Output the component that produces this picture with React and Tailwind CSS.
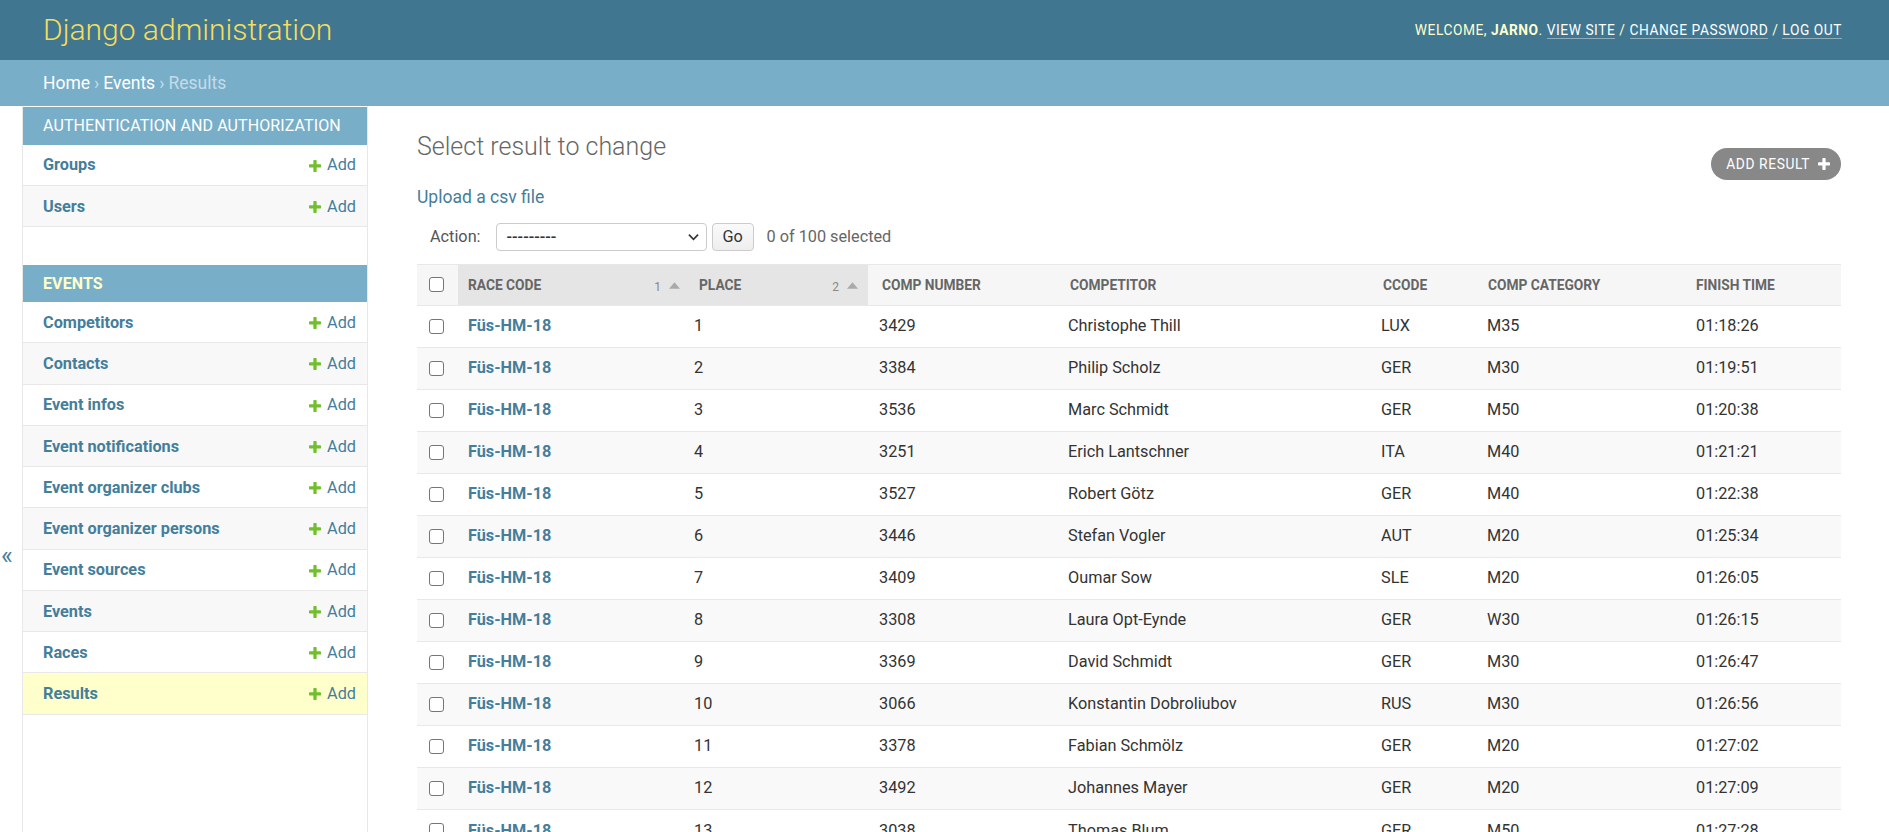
import React from "react";

const rows = [
  ["1", "3429", "Christophe Thill", "LUX", "M35", "01:18:26"],
  ["2", "3384", "Philip Scholz", "GER", "M30", "01:19:51"],
  ["3", "3536", "Marc Schmidt", "GER", "M50", "01:20:38"],
  ["4", "3251", "Erich Lantschner", "ITA", "M40", "01:21:21"],
  ["5", "3527", "Robert Götz", "GER", "M40", "01:22:38"],
  ["6", "3446", "Stefan Vogler", "AUT", "M20", "01:25:34"],
  ["7", "3409", "Oumar Sow", "SLE", "M20", "01:26:05"],
  ["8", "3308", "Laura Opt-Eynde", "GER", "W30", "01:26:15"],
  ["9", "3369", "David Schmidt", "GER", "M30", "01:26:47"],
  ["10", "3066", "Konstantin Dobroliubov", "RUS", "M30", "01:26:56"],
  ["11", "3378", "Fabian Schmölz", "GER", "M20", "01:27:02"],
  ["12", "3492", "Johannes Mayer", "GER", "M20", "01:27:09"],
  ["13", "3038", "Thomas Blum", "GER", "M50", "01:27:28"],
];

const PLUS =
  "M1600 796v192q0 40-28 68t-68 28h-416v416q0 40-28 68t-68 28h-192q-40 0-68-28t-28-68v-416h-416q-40 0-68-28t-28-68v-192q0-40 28-68t68-28h416v-416q0-40 28-68t68-28h192q40 0 68 28t28 68v416h416q40 0 68 28t28 68z";

function PlusIcon({ className }) {
  return (
    <svg viewBox="192 192 1408 1408" className={className}>
      <path d={PLUS} fill="currentColor" />
    </svg>
  );
}

function SortArrow() {
  return (
    <svg viewBox="0 0 10 6" className="w-[11px] h-[7px] text-[#aaaaaa]">
      <path d="M0 6 L5 0 L10 6 Z" fill="currentColor" />
    </svg>
  );
}

function Checkbox() {
  return (
    <div className="w-[15px] h-[15px] rounded-[3px] border-[1.5px] border-[#767676] bg-white -mt-[1px]" />
  );
}

function SideRow({ name, shade, current }) {
  const bg = current ? "bg-[#ffffcc]" : shade ? "bg-[#f8f8f8]" : "bg-white";
  return (
    <div
      className={`flex items-center justify-between h-[41.25px] border-b border-[#e8e8e8] pl-[20px] pr-[11px] pt-[2px] ${bg}`}
    >
      <span className="font-bold text-[16.25px] text-[#447e9b]">{name}</span>
      <span className="flex items-center gap-[6px] text-[16.25px] text-[#447e9b]">
        <PlusIcon className="w-[12px] h-[12px] text-[#70bf2b]" />
        Add
      </span>
    </div>
  );
}

function Caption({ children, current }) {
  return (
    <div
      className={`h-[37.5px] flex items-center pl-[20px] pt-[1px] bg-[#79aec8] text-[16px] tracking-[0.1px] uppercase ${
        current ? "font-bold text-[#ffffcc]" : "text-white"
      }`}
    >
      {children}
    </div>
  );
}

const cols = [41, 232, 178, 192, 313, 105, 208, 155];

export default function App() {
  const eventModels = [
    "Competitors",
    "Contacts",
    "Event infos",
    "Event notifications",
    "Event organizer clubs",
    "Event organizer persons",
    "Event sources",
    "Events",
    "Races",
    "Results",
  ];
  return (
    <div className="h-[832px] overflow-hidden bg-white font-['Roboto','Liberation_Sans',sans-serif] text-[#333]">
      {/* Header */}
      <div className="h-[60px] bg-[#417690] flex items-center justify-between pl-[43px] pr-[47px]">
        <div className="text-[30px] font-light text-[#f5dd5d] leading-none">
          Django administration
        </div>
        <div className="text-[13.75px] tracking-[0.55px] uppercase text-[#ffffcc]">
          Welcome, <strong className="font-bold">Jarno</strong>.{" "}
          <span className="text-white border-b border-white/40">View site</span> /{" "}
          <span className="text-white border-b border-white/40">Change password</span> /{" "}
          <span className="text-white border-b border-white/40">Log out</span>
        </div>
      </div>
      {/* Breadcrumbs */}
      <div className="h-[46px] bg-[#79aec8] flex items-center pl-[43px] text-[17.5px] text-[#c4dce8]">
        <span className="text-white">Home</span>
        <span className="mx-[4px]">›</span>
        <span className="text-white">Events</span>
        <span className="mx-[4px]">›</span>
        <span>Results</span>
      </div>
      {/* Body */}
      <div className="flex h-[726px]">
        <div className="w-[23px] shrink-0 border-r border-[#e8e8e8] flex flex-col items-start pt-[437px] pl-[1px]">
          <span className="text-[25px] leading-none text-[#447e9b]">«</span>
        </div>
        <div className="w-[345px] shrink-0 border-r border-[#e8e8e8] pt-[1px]">
          <Caption>Authentication and Authorization</Caption>
          <SideRow name="Groups" />
          <SideRow name="Users" shade />
          <div className="h-[37.5px]" />
          <Caption current>Events</Caption>
          {eventModels.map((m, i) => (
            <SideRow
              key={m}
              name={m}
              shade={i % 2 === 1}
              current={m === "Results"}
            />
          ))}
        </div>
        <div className="flex-1 pl-[49px] pr-[48px] pt-[26px]">
          <div className="flex items-start justify-between">
            <h1 className="text-[25px] font-light text-[#666] leading-[30px]">
              Select result to change
            </h1>
            <div className="mt-[16px] h-[32px] pl-[15px] pr-[11px] rounded-full bg-[#888888] flex items-center gap-[8px] text-white text-[13.75px] tracking-[0.625px] uppercase">
              Add result
              <PlusIcon className="w-[12px] h-[12px] text-white" />
            </div>
          </div>
          <div className="mt-[7px] text-[17.5px] leading-[21px] text-[#447e9b]">
            Upload a csv file
          </div>
          <div className="mt-[15px] flex items-center h-[28px] text-[16.25px]">
            <span className="ml-[13px] text-[#555]">Action:</span>
            <div className="ml-[15px] w-[211px] h-[28px] border border-[#cccccc] rounded-[4px] bg-white flex items-center justify-between pl-[10px] pr-[7px]">
              <span className="text-[#333] text-[16.25px] font-medium">---------</span>
              <svg viewBox="0 0 12 8" className="w-[11px] h-[8px]">
                <path d="M1 1.5 L6 6.5 L11 1.5" stroke="#333" strokeWidth="1.8" fill="none" />
              </svg>
            </div>
            <div className="ml-[5px] w-[42px] h-[28px] border border-[#cccccc] rounded-[4px] bg-gradient-to-b from-[#fafafa] to-[#eeeeee] flex items-center justify-center text-[#333]">
              Go
            </div>
            <span className="ml-[13px] text-[#666]">0 of 100 selected</span>
          </div>
          <table className="mt-[13px] w-full table-fixed border-collapse text-[16.25px]">
            <colgroup>
              {cols.map((w, i) => (
                <col key={i} style={{ width: w }} />
              ))}
            </colgroup>
            <thead>
              <tr className="h-[41px] text-[13.75px] font-semibold uppercase text-[#666] text-left">
                <th className="bg-[#f6f6f6] border-t border-[#e8e8e8] pl-[12px] align-middle">
                  <Checkbox />
                </th>
                <th className="bg-[#e5e5e5] border-t border-[#e8e8e8] pl-[10px] pr-[10px]">
                  <div className="flex items-center justify-between">
                    <span>Race code</span>
                    <span className="flex items-center gap-[8px] font-normal text-[12px] text-[#888]">
                      <span className="mt-[4px]">1</span>
                      <SortArrow />
                    </span>
                  </div>
                </th>
                <th className="bg-[#e5e5e5] border-t border-[#e8e8e8] pl-[9px] pr-[10px]">
                  <div className="flex items-center justify-between">
                    <span>Place</span>
                    <span className="flex items-center gap-[8px] font-normal text-[12px] text-[#888]">
                      <span className="mt-[4px]">2</span>
                      <SortArrow />
                    </span>
                  </div>
                </th>
                <th className="bg-[#f6f6f6] border-t border-[#e8e8e8] pl-[14px]">Comp number</th>
                {["Competitor", "Ccode", "Comp category", "Finish time"].map((h) => (
                  <th key={h} className="bg-[#f6f6f6] border-t border-[#e8e8e8] pl-[10px]">
                    {h}
                  </th>
                ))}
              </tr>
            </thead>
            <tbody>
              {rows.map((r, i) => (
                <tr
                  key={i}
                  className={`h-[42px] border-t border-[#e8e8e8] ${i % 2 === 1 ? "bg-[#f9f9f9]" : "bg-white"}`}
                >
                  <td className="pl-[12px]">
                    <Checkbox />
                  </td>
                  <td className="pl-[10px] font-bold text-[#447e9b]">Füs-HM-18</td>
                  <td className="pl-[4px]">{r[0]}</td>
                  <td className="pl-[11px]">{r[1]}</td>
                  <td className="pl-[8px]">{r[2]}</td>
                  <td className="pl-[8px]">{r[3]}</td>
                  <td className="pl-[9px]">{r[4]}</td>
                  <td className="pl-[10px]">{r[5]}</td>
                </tr>
              ))}
            </tbody>
          </table>
        </div>
      </div>
    </div>
  );
}
